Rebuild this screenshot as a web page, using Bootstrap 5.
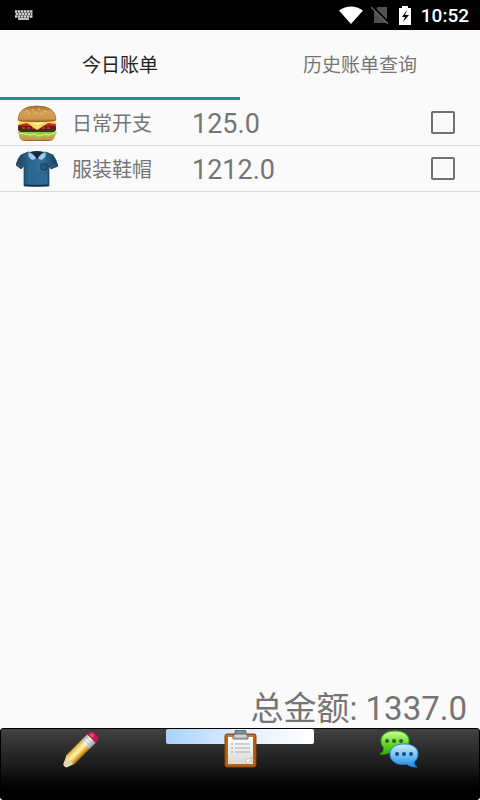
<!DOCTYPE html>
<html lang="zh-CN">
<head>
<meta charset="utf-8">
<meta name="viewport" content="width=device-width, initial-scale=1">
<title>今日账单</title>
<link href="https://cdn.jsdelivr.net/npm/bootstrap@5.3.0/dist/css/bootstrap.min.css" rel="stylesheet">
<style>
body { font-family: Roboto, "Noto Sans CJK SC", sans-serif; background: #fafafa; color: #757575; }
svg { display: block; flex: none; }
.statusbar { height: 30px; background: #000; color: #fff; padding: 0 11px 0 14px; }
.clock { font-size: 19px; line-height: 28px; font-weight: 500; padding-top: 2px; }
.bill-tabs .nav-link { height: 70px; margin: 0; padding: 4px 0 0; border: 0; border-bottom: 3px solid transparent; border-radius: 0; font-size: 19px; line-height: 24px; color: #757575; }
.bill-tabs .nav-link.active { color: #212121; border-bottom-color: #159788; background: none; }
.bill { height: 46px; padding: 0 25px 0 16px; background: none; color: #757575; border: 0; border-bottom: 1px solid #d9d9d9 !important; }
.bill-name { width: 120px; margin-left: 14px; padding-top: 2px; font-size: 20px; line-height: 24px; }
.bill-sum { font-size: 27px; line-height: 32px; padding-top: 2px; }
.bill .form-check-input { width: 24px; height: 23px; margin: 0; border: 2px solid #717171; border-radius: 2px; background-color: transparent; }
.bill .form-check-input:checked { background-color: #159788; border-color: #159788; }
.total { font-size: 33px; line-height: 38px; padding-right: 13px; }
.dock { height: 72px; background: linear-gradient(#424242, #202020 45%, #000 85%); border: 1px solid #000; border-radius: 3px; }
.dock-item { height: 70px; padding: 1px 0 0; border: 0; background: none; }
.dock-item.active::before { content: ""; position: absolute; inset: 0 6px auto; height: 15px; border-radius: 2px; background: linear-gradient(90deg, #a9d2fc, #e4f1fe 55%, #fff); }
.dock-item svg { position: relative; }
</style>
<script src="https://cdn.jsdelivr.net/npm/bootstrap@5.3.0/dist/js/bootstrap.bundle.min.js" defer></script>
</head>
<body class="d-flex flex-column min-vh-100">
<header class="statusbar d-flex align-items-center">
  <svg width="20" height="11" viewBox="0 0 20 11" aria-hidden="true"><path d="M1 0h18v8H1z" fill="#555"/><path d="M1 1.500h18M1 6.500h18" stroke="#ddd" stroke-width="2" stroke-dasharray="2 1"/><path d="M2 4h16" stroke="#ccc" stroke-width="2" stroke-dasharray="2 1"/><path d="M4 8h11v2H4z" fill="#bbb"/></svg>
  <svg class="ms-auto" width="24" height="18" viewBox="0 0 24 18" aria-hidden="true"><path d="M0 4.500Q12-3.500 24 4.500L12 18z" fill="#fff"/></svg>
  <svg class="ms-2" width="18" height="18" viewBox="0 0 18 18" aria-hidden="true"><path d="M7 1h9v16H3V5z" fill="#515151"/><path d="M1 0l17 17" stroke="#000" stroke-width="2"/><path d="M0 1l17 17" stroke="#666" stroke-width="1.500"/></svg>
  <svg class="ms-2 me-2" width="16" height="19" viewBox="3 0 14 19" aria-hidden="true"><path d="M4 2h3V0h6v2h3v17H4z" fill="#fff"/><path d="M12 4l-5 7h3l-2 5 6-7h-4z" fill="#000"/></svg>
  <span class="clock">10:52</span>
</header>
<nav class="nav nav-tabs nav-fill border-0 bill-tabs" role="tablist">
  <button class="nav-link active w-50" type="button" role="tab" aria-selected="true">今日账单</button>
  <button class="nav-link w-50" type="button" role="tab" aria-selected="false">历史账单查询</button>
</nav>
<main class="flex-grow-1 d-flex flex-column">
  <ul class="list-group list-group-flush">
    <li class="list-group-item bill d-flex align-items-center">
      <svg width="42" height="38" viewBox="0 0 42 38" aria-hidden="true">
        <defs><linearGradient id="bun" x2="0" y2="1"><stop stop-color="#a76b28"/><stop offset=".35" stop-color="#d0a056"/><stop offset=".8" stop-color="#cf984a"/><stop offset="1" stop-color="#8d5a20"/></linearGradient></defs>
        <path d="M3 28h36v3q0 6-7 6H10q-7 0-7-6z" fill="url(#bun)"/>
        <path d="M1 28q5 1 9-2h22q4 3 9 2l-2 4-5-1-3 3-4-3-4 4-5-3-4 2-4-3-4 2z" fill="#8bcf3a"/>
        <path d="M3 29l6 1 5 1 4-1 6 2 5-2 4 1 6-2" fill="none" stroke="#d8f3a0"/>
        <rect x="2" y="20" width="38" height="8" rx="3" fill="#532719"/>
        <path d="M6 24h30" stroke="#8a4a2c" stroke-width="2" stroke-dasharray="3 2"/>
        <rect x="3" y="18" width="37" height="4" rx="2" fill="#cf1f27"/>
        <path d="M3 15h36l1 5-8-1-11 7-10-7-9 2z" fill="#ffdc58"/><path d="M12 17l10 4 9-4" fill="#fff4b0"/>
        <path d="M2 15Q3 2 21 2t19 13q0 2-3 2-16 2-32 0-3 0-3-2z" fill="url(#bun)" stroke="#8d5920" stroke-width=".6"/>
        <path d="M10 7l2-1m4 0h2m4-1h2m4 2l2 1m-18 2h2m5-1h2m4 1h2" stroke="#e6c48a"/>
      </svg>
      <label class="bill-name" for="bill-daily">日常开支</label>
      <span class="bill-sum">125.0</span>
      <input class="form-check-input ms-auto" type="checkbox" id="bill-daily">
    </li>
    <li class="list-group-item bill d-flex align-items-center">
      <svg width="42" height="38" viewBox="0 0 42 38" aria-hidden="true">
        <defs><linearGradient id="denim"><stop stop-color="#193e5c"/><stop offset=".3" stop-color="#28658f"/><stop offset=".65" stop-color="#2d6c98"/><stop offset="1" stop-color="#173d5b"/></linearGradient></defs>
        <path d="M12 2Q21 5 30 2l7 3q3 4 5 11l-7 3-2-3v20q-12 1-25 0V16l-3 3-5-4Q2 8 5 5z" fill="url(#denim)" stroke="#173650" stroke-width=".7"/>
        <path d="M14 2Q21 0 28 2l-7 7z" fill="#12283b"/>
        <path d="M12 3q4-1 8 5-1 2-4 2-4-2-4-7zM30 3q-4-1-8 5 1 2 4 2 4-2 4-7z" fill="#a6c9e6" stroke="#6096bd" stroke-width=".8"/>
        <path d="M20 9v12h3V9M14 14v20M30 22v12M1 14l6 3M35 17l6-3" fill="none" stroke="#3f769e" stroke-width=".7"/>
        <path d="M25 14h6v5l-3 1-3-1z" fill="#235d88" stroke="#15354e" stroke-width=".8"/><path d="M9 35q12 1 23 0" fill="none" stroke="#10283c"/>
      </svg>
      <label class="bill-name" for="bill-clothes">服装鞋帽</label>
      <span class="bill-sum">1212.0</span>
      <input class="form-check-input ms-auto" type="checkbox" id="bill-clothes">
    </li>
  </ul>
  <div class="total mt-auto text-end">总金额: 1337.0</div>
</main>
<nav class="dock row g-0" aria-label="主导航">
  <button class="dock-item col d-flex justify-content-center align-items-start" type="button" aria-label="记账">
    <svg width="40" height="40" viewBox="0 0 40 40">
      <defs><linearGradient id="wood" x2="0" y2="1"><stop stop-color="#d8a52f"/><stop offset=".25" stop-color="#f3d577"/><stop offset=".45" stop-color="#fff3bd"/><stop offset=".7" stop-color="#edc250"/><stop offset="1" stop-color="#a66c0c"/></linearGradient><linearGradient id="ferrule" x2="0" y2="1"><stop stop-color="#aaa"/><stop offset=".4" stop-color="#fff"/><stop offset="1" stop-color="#999"/></linearGradient></defs>
      <g transform="translate(3 36) rotate(-45)">
        <path d="M1-2L10-6v12L1 3Q-1 0 1-2z" fill="#e3d6a8"/>
        <rect x="8" y="-6" width="24" height="12" rx="1" fill="url(#wood)"/>
        <rect x="30" y="-6" width="9" height="12" fill="url(#ferrule)"/><path d="M33-6V6m3-12V6" stroke="#aaa" stroke-width=".7"/>
        <path d="M39-6h2q4 0 4 6t-4 6h-2z" fill="#c5164e"/><path d="M40-4h3v4h-3z" fill="#e2507a"/>
      </g>
    </svg>
  </button>
  <button class="dock-item active col d-flex justify-content-center align-items-start position-relative" type="button" aria-label="账单" aria-current="page">
    <svg width="36" height="40" viewBox="0 0 36 40">
      <defs><linearGradient id="paper" x2="0" y2="1"><stop stop-color="#fff"/><stop offset="1" stop-color="#d7d7d7"/></linearGradient></defs>
      <rect x="3" y="4" width="31" height="33" rx="2" fill="#b9630e" stroke="#86440b"/><path d="M5 6h27" stroke="#dd9138"/>
      <path d="M6 7h25v20l-6 7H6z" fill="url(#paper)"/><path d="M6 34h25v-7z" fill="#ddd"/><path d="M25 34l-1-5q4 1 7-2z" fill="#fff" stroke="#aaa" stroke-width=".5"/>
      <path d="M13 14h15M13 18h15M13 22h15" stroke="#aaa"/><path d="M9 14h2m-2 4h2m-2 4h2" stroke="#999"/>
      <rect x="13" y="0" width="11" height="5" rx="2" fill="#79949b" stroke="#4c6268"/>
      <path d="M13 4h11l2 2v3H11V6z" fill="#b4b8bb" stroke="#707579"/><path d="M13 6h11" stroke="#eee"/>
    </svg>
  </button>
  <button class="dock-item col d-flex justify-content-center align-items-start" type="button" aria-label="消息">
    <svg width="42" height="40" viewBox="0 0 42 40">
      <defs><linearGradient id="green" x2="0" y2="1"><stop stop-color="#d0ff9a"/><stop offset=".5" stop-color="#70da30"/><stop offset="1" stop-color="#31a80c"/></linearGradient><linearGradient id="blue" x2="0" y2="1"><stop stop-color="#d3efff"/><stop offset=".5" stop-color="#72c2f7"/><stop offset="1" stop-color="#2088dd"/></linearGradient></defs>
      <path d="M17 1c9 0 14 4 14 10s-5 11-14 11l-4-1q-4 4-11 3 4-1 4-6-3-3-3-7C3 5 8 1 17 1z" fill="url(#green)" stroke="#32b60c"/>
      <path d="M9 11h.1M16 11h.1M23 11h.1" stroke="#2d6415" stroke-width="4" stroke-linecap="round"/>
      <path d="M26 14c9 0 14 4 14 10 0 4-2 6-4 8 0 3 1 4 3 5-5 0-8-1-10-3-10 2-17-3-17-10 0-6 5-10 14-10z" fill="url(#blue)" stroke="#228bdc"/>
      <path d="M19 24h.1M26 24h.1M33 24h.1" stroke="#1c4d7c" stroke-width="4" stroke-linecap="round"/>
    </svg>
  </button>
</nav>
</body>
</html>
